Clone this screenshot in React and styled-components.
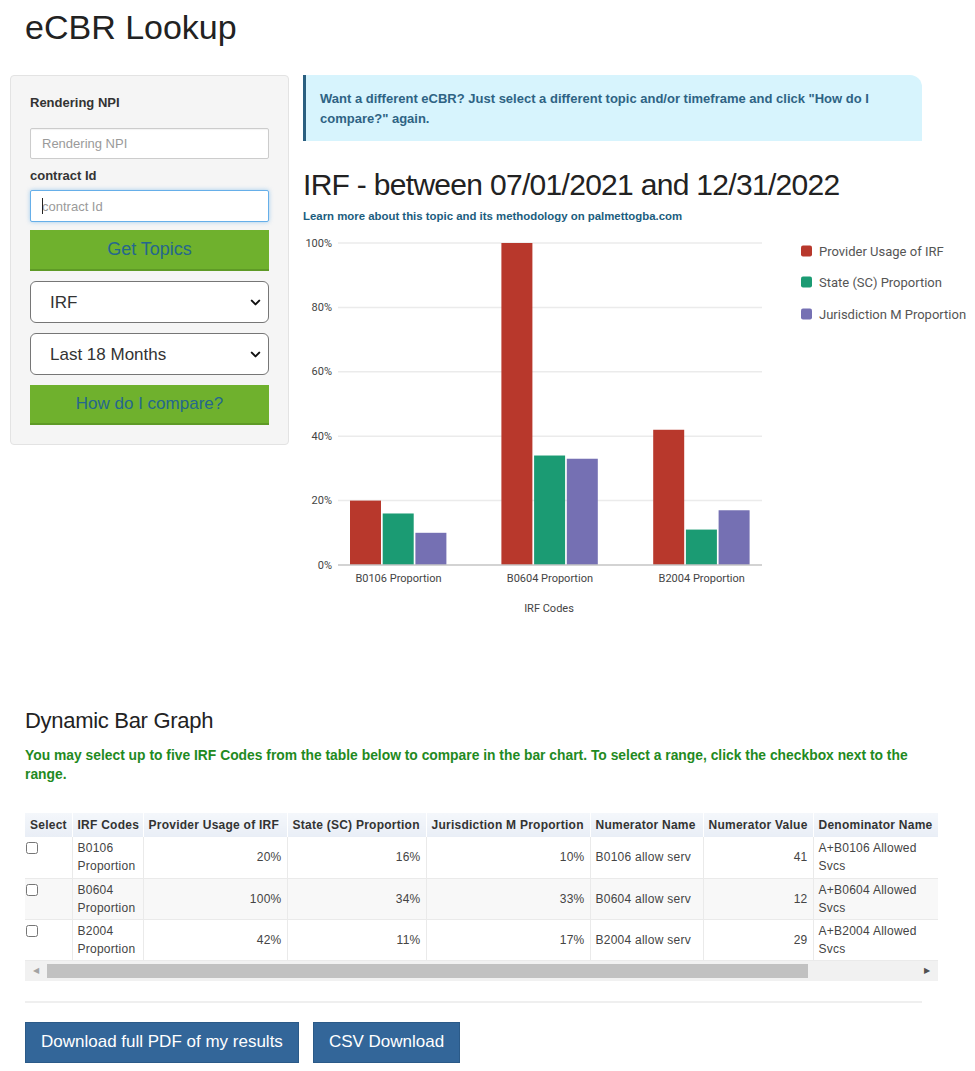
import React from 'react';
import styled, { createGlobalStyle } from 'styled-components';
import { ChevronDown } from 'lucide-react';

const GlobalStyle = createGlobalStyle`
    body {
        margin: 0;
        background: #fff;
        font-family: "Liberation Sans", Arial, sans-serif;
        color: #333;
    }
`;

const Page = styled.div`
    width: 975px;
    padding: 0 0 10px 10px;
    box-sizing: border-box;
`;

const Title = styled.h1`
    margin: 9px 0 30px 15px;
    font-size: 34px;
    line-height: 36px;
    font-weight: 400;
    color: #222;
`;

const TopRow = styled.div`
    display: flex;
    align-items: flex-start;
    gap: 14px;
`;

const Panel = styled.div`
    width: 279px;
    box-sizing: border-box;
    padding: 19px 19px 19px 19px;
    background: #f5f5f5;
    border: 1px solid #e3e3e3;
    border-radius: 4px;
    display: flex;
    flex-direction: column;
`;

const Label = styled.label`
    display: block;
    font-size: 13px;
    line-height: 16px;
    font-weight: 700;
    color: #333;
    margin-top: ${p => p.$mt || 0}px;
`;

const FieldWrap = styled.div`
    position: relative;
    margin-top: ${p => p.$mt || 0}px;
`;

const TextInput = styled.input`
    display: block;
    width: 100%;
    height: ${p => p.$h || 31}px;
    box-sizing: border-box;
    padding: 0 11px;
    font-family: inherit;
    font-size: 13px;
    color: #555;
    background: #fff;
    border: 1px solid ${p => p.$focus ? '#66afe9' : '#ccc'};
    border-radius: 2px;
    box-shadow: ${p => p.$focus ? '0 0 4px rgba(102,175,233,0.6)' : 'inset 0 1px 1px rgba(0,0,0,0.05)'};
    outline: none;
    &::placeholder {
        color: #9a9a9a;
    }
`;

const Caret = styled.span`
    position: absolute;
    left: 12px;
    top: 8px;
    width: 1px;
    height: 16px;
    background: #222;
`;

const GreenButton = styled.button`
    display: block;
    width: 100%;
    height: ${p => p.$h || 41}px;
    margin-top: ${p => p.$mt || 0}px;
    font-family: inherit;
    font-size: ${p => p.$fs || 18}px;
    color: #25678d;
    background: #6fb12d;
    border: none;
    border-bottom: 2px solid #5e9a26;
    border-radius: 0;
    cursor: pointer;
`;

const SelectBox = styled.select`
    display: block;
    width: 100%;
    height: 42px;
    box-sizing: border-box;
    padding: 0 0 0 19px;
    appearance: none;
    font-family: inherit;
    font-size: 17px;
    color: #333;
    background: #fff;
    border: 1px solid #767676;
    border-radius: 6px;
`;

const Chevron = styled(ChevronDown)`
    position: absolute;
    right: 6px;
    top: 14px;
    pointer-events: none;
    color: #111;
`;

const RightCol = styled.div`
    flex: 1;
    display: flex;
    flex-direction: column;
`;

const Alert = styled.div`
    width: 619px;
    box-sizing: border-box;
    padding: 14px 17px 12px 14px;
    background: #d7f4fd;
    border-left: 3px solid #2a5f80;
    border-top-right-radius: 12px;
    font-size: 13px;
    line-height: 20px;
    font-weight: 700;
    color: #2e6384;
`;

const ChartTitle = styled.h2`
    margin: 27px 0 0 0;
    font-size: 30px;
    line-height: 33px;
    font-weight: 400;
    letter-spacing: -0.7px;
    color: #222;
`;

const TopicLink = styled.a`
    display: block;
    margin-top: 8px;
    font-size: 11.4px;
    line-height: 14px;
    font-weight: 700;
    color: #1b5d7e;
    text-decoration: none;
`;

const ChartSvg = styled.svg`
    display: block;
    margin-top: 7px;
    font-family: Roboto, "Liberation Sans", sans-serif;
`;

const Section = styled.div`
    padding-left: 15px;
    margin-top: ${p => p.$mt || 0}px;
`;

const SubTitle = styled.h3`
    margin: 0;
    font-size: 22px;
    line-height: 24px;
    font-weight: 400;
    letter-spacing: -0.3px;
    color: #222;
`;

const Hint = styled.p`
    margin: 13px 0 0 0;
    width: 900px;
    font-size: 13.85px;
    line-height: 19px;
    font-weight: 700;
    color: #1f8a22;
`;

const TableBox = styled.div`
    width: 913px;
    margin-top: 29px;
`;

const TableClip = styled.div`
    overflow: hidden;
`;

const Table = styled.table`
    border-collapse: collapse;
    table-layout: fixed;
    font-size: 12px;
    letter-spacing: 0.25px;
    color: #444;
`;

const Th = styled.th`
    height: 24px;
    padding: 0 5px;
    text-align: left;
    white-space: nowrap;
    font-weight: 700;
    color: #333;
    background: linear-gradient(#f4f7fb, #e9eef6);
    border-right: 1px solid #fff;
`;

const Tr = styled.tr`
    background: ${p => p.$alt ? '#f8f8f8' : '#fff'};
    border-bottom: 1px solid #eaeaea;
`;

const Td = styled.td`
    height: 41px;
    box-sizing: border-box;
    padding: 2px 5px;
    line-height: 18px;
    vertical-align: ${p => p.$top ? 'top' : 'middle'};
    text-align: ${p => p.$num ? 'right' : 'left'};
    border-right: 1px solid #eaeaea;
    overflow: hidden;
`;

const Check = styled.input`
    margin: 3px 0 0 -4px;
    width: 12px;
    height: 12px;
`;

const ScrollBar = styled.div`
    display: flex;
    align-items: center;
    height: 20px;
    background: #f1f1f1;
`;

const ScrollArrow = styled.div`
    width: 22px;
    display: flex;
    justify-content: center;
    color: ${p => p.$dim ? '#a3a3a3' : '#505050'};
    font-size: 8px;
`;

const Thumb = styled.div`
    width: 761px;
    height: 14px;
    background: #c1c1c1;
`;

const Track = styled.div`
    flex: 1;
`;

const Rule = styled.hr`
    width: 897px;
    margin: 20px 0 0 0;
    border: none;
    border-top: 2px solid #efefef;
`;

const ButtonRow = styled.div`
    display: flex;
    gap: 14px;
    margin-top: 19px;
`;

const BlueButton = styled.button`
    height: 41px;
    padding: 0 15px;
    font-family: inherit;
    font-size: 17px;
    color: #fff;
    background: #336699;
    border: 1px solid #2b5a88;
    border-radius: 0;
    cursor: pointer;
`;

const series = [
    { name: 'Provider Usage of IRF', color: '#b8382c' },
    { name: 'State (SC) Proportion', color: '#1b9b73' },
    { name: 'Jurisdiction M Proportion', color: '#7570b3' },
];

const groups = [
    { label: 'B0106 Proportion', x: 47, values: [20, 16, 10] },
    { label: 'B0604 Proportion', x: 198.4, values: [100, 34, 33] },
    { label: 'B2004 Proportion', x: 350.2, values: [42, 11, 17] },
];

const rows = [
    { code: ['B0106', 'Proportion'], usage: '20%', state: '16%', jur: '10%', num: 'B0106 allow serv', value: 41, den: 'A+B0106 Allowed Svcs' },
    { code: ['B0604', 'Proportion'], usage: '100%', state: '34%', jur: '33%', num: 'B0604 allow serv', value: 12, den: 'A+B0604 Allowed Svcs' },
    { code: ['B2004', 'Proportion'], usage: '42%', state: '11%', jur: '17%', num: 'B2004 allow serv', value: 29, den: 'A+B2004 Allowed Svcs' },
];

const columns = [
    { title: 'Select', w: 47 },
    { title: 'IRF Codes', w: 71 },
    { title: 'Provider Usage of IRF', w: 144 },
    { title: 'State (SC) Proportion', w: 139 },
    { title: 'Jurisdiction M Proportion', w: 164 },
    { title: 'Numerator Name', w: 113 },
    { title: 'Numerator Value', w: 110 },
    { title: 'Denominator Name', w: 135 },
];

const top = 13;
const unit = 3.22;
const yFor = v => top + (100 - v) * unit;
const legendY = [21, 52, 84];

const BarChart = () => (
    <ChartSvg width="672" height="390" viewBox="0 0 672 390">
        {[100, 80, 60, 40, 20].map(v => (
            <g key={v}>
                <line x1="35" x2="459" y1={yFor(v)} y2={yFor(v)} stroke="#ebebeb" strokeWidth="1.5" />
                <text x="29" y={yFor(v)} textAnchor="end" dominantBaseline="central" fontSize="11" fill="#444">{v}%</text>
            </g>
        ))}
        {groups.map(g => (
            <g key={g.label}>
                {g.values.map((v, i) => (
                    <rect key={i} x={g.x + i * 32.7} y={yFor(v)} width="31" height={v * unit} fill={series[i].color} />
                ))}
                <text x={g.x + 48.5} y="348" textAnchor="middle" dominantBaseline="central" fontSize="11" fill="#444">{g.label}</text>
            </g>
        ))}
        <line x1="35" x2="459" y1={yFor(0)} y2={yFor(0)} stroke="#c4c4c4" strokeWidth="1.5" />
        <text x="29" y={yFor(0)} textAnchor="end" dominantBaseline="central" fontSize="11" fill="#444">0%</text>
        <text x="246" y="378" textAnchor="middle" dominantBaseline="central" fontSize="11" fill="#444">IRF Codes</text>
        {series.map((s, i) => (
            <g key={s.name}>
                <rect x="498" y={legendY[i] - 5.5} width="11" height="11" rx="2" fill={s.color} />
                <text x="516" y={legendY[i]} dominantBaseline="central" fontSize="13" fill="#555">{s.name}</text>
            </g>
        ))}
    </ChartSvg>
);

const App = () => {
    return (
        <Page>
            <GlobalStyle />
            <Title>eCBR Lookup</Title>
            <TopRow>
                <Panel>
                    <Label>Rendering NPI</Label>
                    <FieldWrap $mt={17}>
                        <TextInput placeholder="Rendering NPI" />
                    </FieldWrap>
                    <Label $mt={9}>contract Id</Label>
                    <FieldWrap $mt={6}>
                        <TextInput $focus $h={32} placeholder="contract Id" />
                        <Caret />
                    </FieldWrap>
                    <GreenButton $mt={8}>Get Topics</GreenButton>
                    <FieldWrap $mt={10}>
                        <SelectBox defaultValue="IRF">
                            <option>IRF</option>
                        </SelectBox>
                        <Chevron size={15} strokeWidth={3.2} />
                    </FieldWrap>
                    <FieldWrap $mt={10}>
                        <SelectBox defaultValue="Last 18 Months">
                            <option>Last 18 Months</option>
                        </SelectBox>
                        <Chevron size={15} strokeWidth={3.2} />
                    </FieldWrap>
                    <GreenButton $mt={10} $h={40} $fs={17}>How do I compare?</GreenButton>
                </Panel>
                <RightCol>
                    <Alert>Want a different eCBR? Just select a different topic and/or timeframe and click "How do I compare?" again.</Alert>
                    <ChartTitle>IRF - between 07/01/2021 and 12/31/2022</ChartTitle>
                    <TopicLink href="#">Learn more about this topic and its methodology on palmettogba.com</TopicLink>
                    <BarChart />
                </RightCol>
            </TopRow>
            <Section $mt={89}>
                <SubTitle>Dynamic Bar Graph</SubTitle>
                <Hint>You may select up to five IRF Codes from the table below to compare in the bar chart. To select a range, click the checkbox next to the range.</Hint>
                <TableBox>
                    <TableClip>
                        <Table style={{ width: columns.reduce((s, c) => s + c.w, 0) }}>
                            <colgroup>
                                {columns.map(c => <col key={c.title} style={{ width: c.w }} />)}
                            </colgroup>
                            <thead>
                                <tr>
                                    {columns.map(c => <Th key={c.title}>{c.title}</Th>)}
                                </tr>
                            </thead>
                            <tbody>
                                {rows.map((r, i) => (
                                    <Tr key={r.num} $alt={i === 1}>
                                        <Td $top><Check type="checkbox" /></Td>
                                        <Td>{r.code[0]}<br />{r.code[1]}</Td>
                                        <Td $num>{r.usage}</Td>
                                        <Td $num>{r.state}</Td>
                                        <Td $num>{r.jur}</Td>
                                        <Td>{r.num}</Td>
                                        <Td $num>{r.value}</Td>
                                        <Td>{r.den}</Td>
                                    </Tr>
                                ))}
                            </tbody>
                        </Table>
                    </TableClip>
                    <ScrollBar>
                        <ScrollArrow $dim>◀</ScrollArrow>
                        <Thumb />
                        <Track />
                        <ScrollArrow>▶</ScrollArrow>
                    </ScrollBar>
                </TableBox>
                <Rule />
                <ButtonRow>
                    <BlueButton>Download full PDF of my results</BlueButton>
                    <BlueButton>CSV Download</BlueButton>
                </ButtonRow>
            </Section>
        </Page>
    );
};

export default App;
